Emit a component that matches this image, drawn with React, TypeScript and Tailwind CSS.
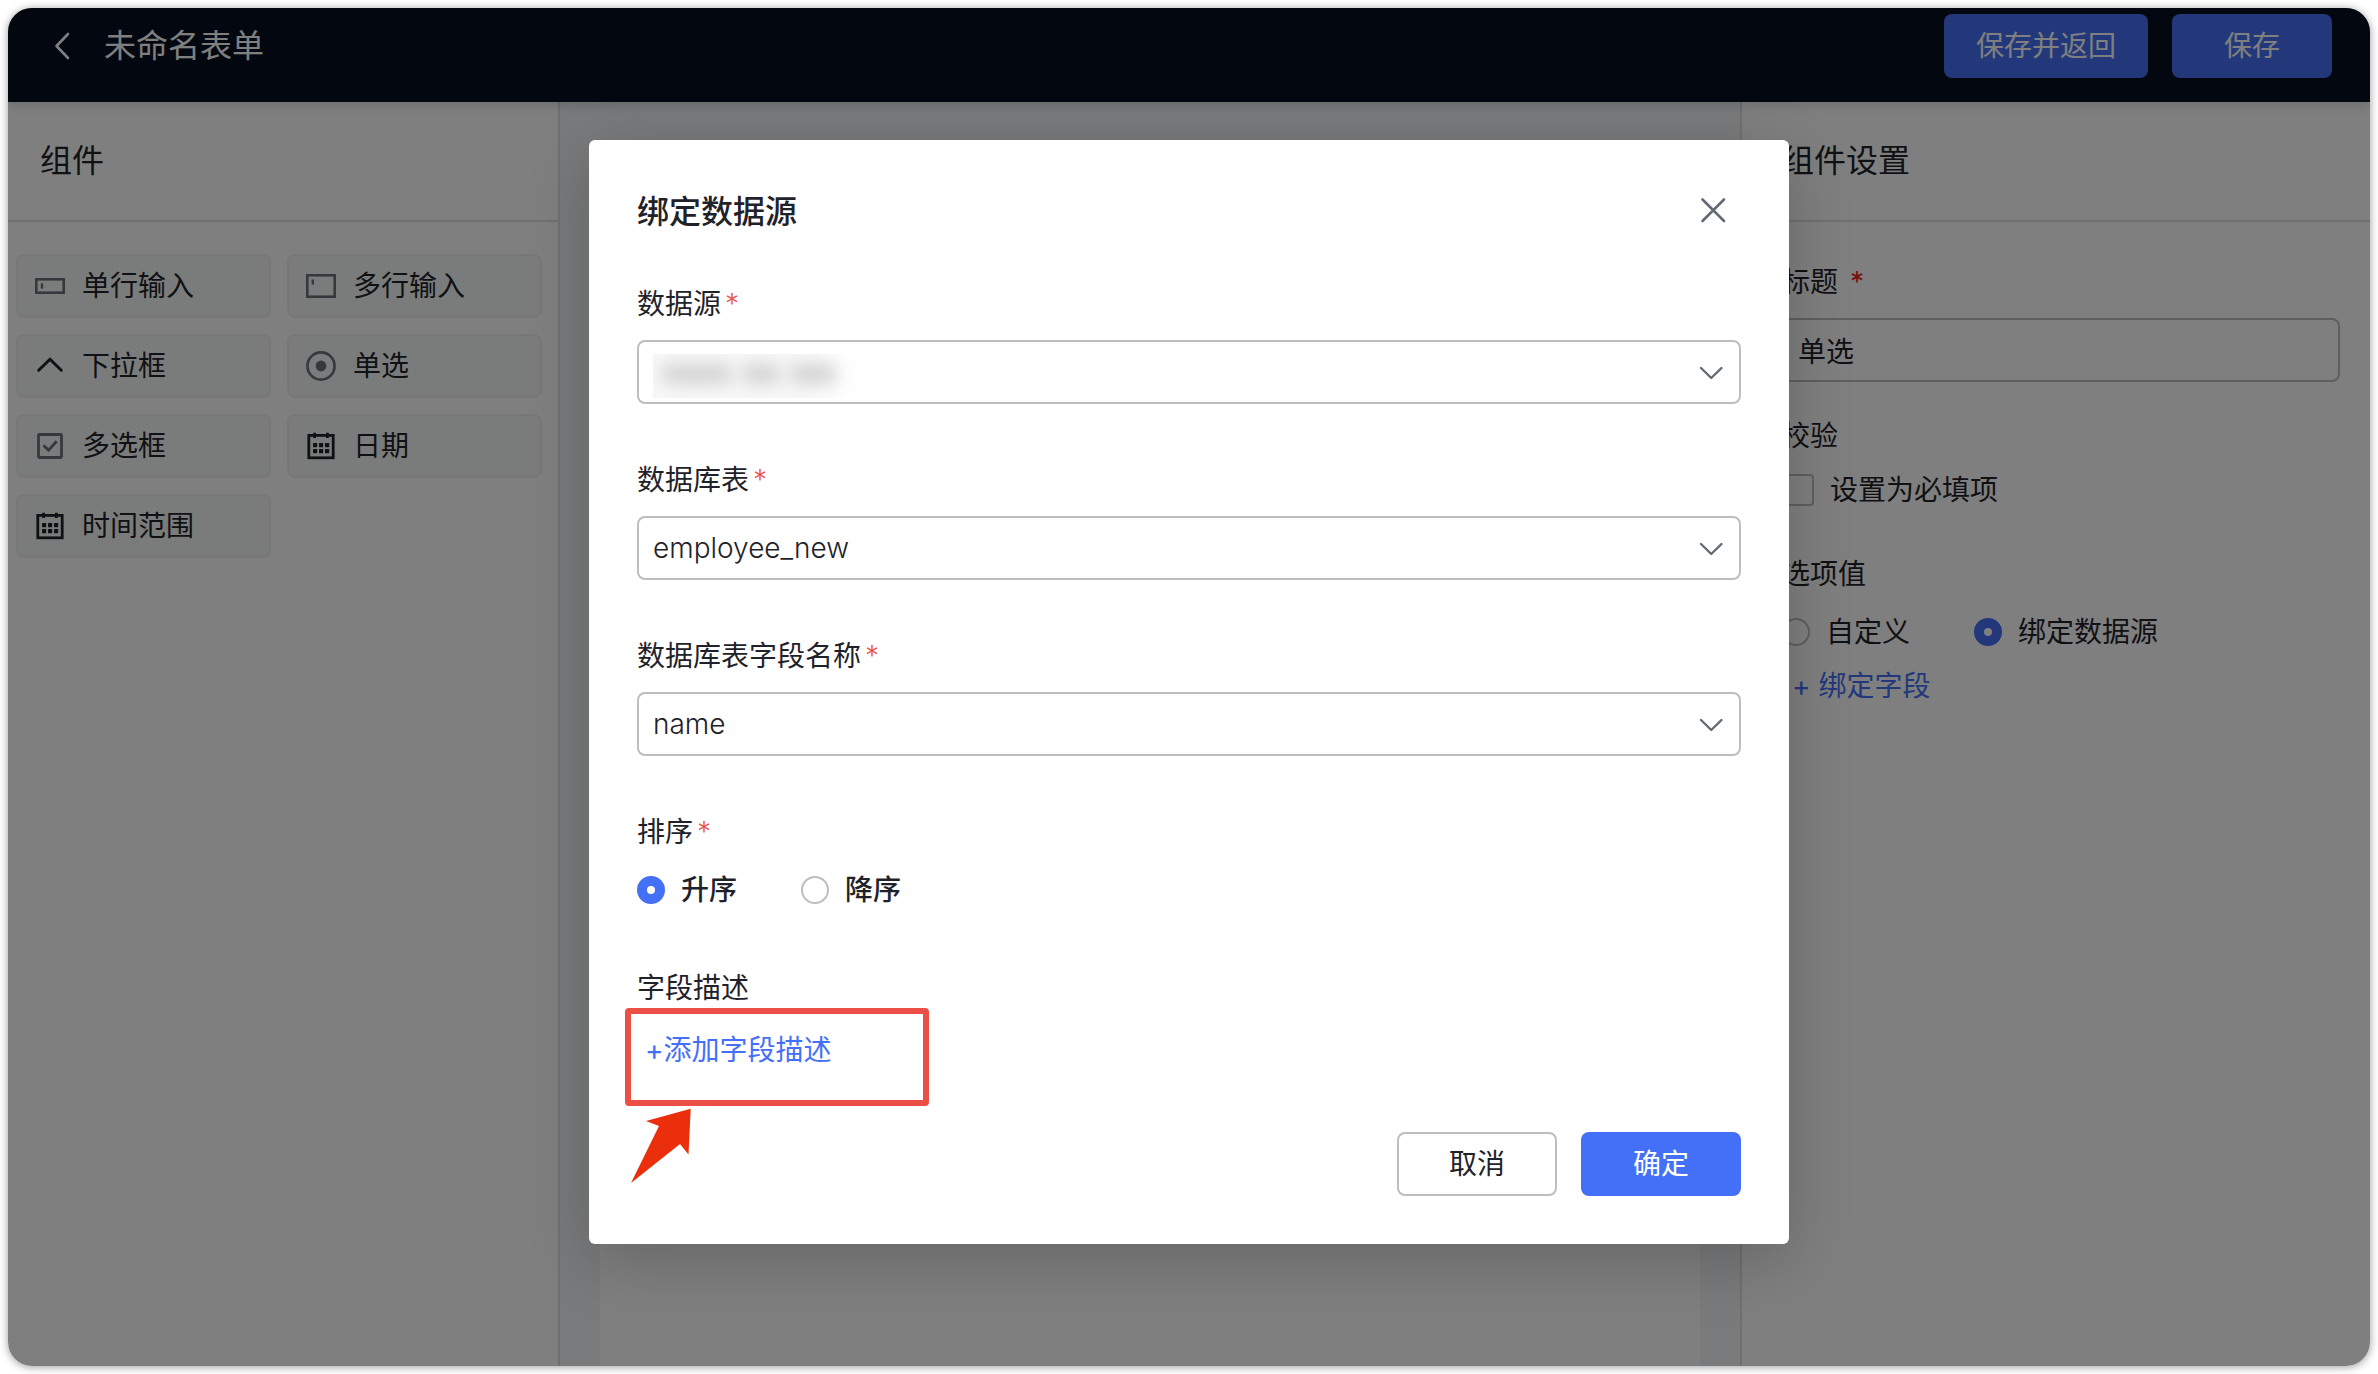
import { useState, type ReactNode } from "react";

const SingleLineIcon = () => (
  <svg className="size-8 text-[#6d717a]" viewBox="0 0 32 32" fill="none" stroke="currentColor" strokeWidth="2.6">
    <rect x="2.3" y="9.3" width="27.4" height="13.4" />
    <path d="M8 13.4v5.2" strokeWidth="2.4" />
  </svg>
);

const MultiLineIcon = () => (
  <svg className="size-8 text-[#6d717a]" viewBox="0 0 32 32" fill="none" stroke="currentColor" strokeWidth="2.6">
    <rect x="2.3" y="5.3" width="27.4" height="21.4" />
    <path d="M7.800 9.400v5.200" strokeWidth="2.400" />
  </svg>
);

const ChevronUpIcon = () => (
  <svg className="size-8" viewBox="0 0 32 32" fill="none" stroke="#1f2329" strokeWidth="3" strokeLinecap="round" strokeLinejoin="round">
    <path d="M4.700 20.300 16 9.200l11.300 11.100" />
  </svg>
);

const RadioIcon = () => (
  <svg className="size-8 text-[#6d717a]" viewBox="0 0 32 32" fill="none">
    <circle cx="16" cy="16" r="13.600" stroke="currentColor" strokeWidth="2.600" />
    <circle cx="16" cy="16" r="5.400" fill="currentColor" />
  </svg>
);

const CheckboxIcon = () => (
  <svg className="size-8 text-[#6d717a]" viewBox="0 0 32 32" fill="none" stroke="currentColor" strokeWidth="2.8">
    <rect x="4.500" y="4.500" width="23" height="23" rx="1" />
    <path d="m9.500 15.200 5 5 8.200-9" />
  </svg>
);

const CalendarIcon = () => (
  <svg className="size-8" viewBox="0 0 32 32" fill="none" stroke="#1f2329" strokeWidth="2.8">
    <rect x="3.800" y="5.400" width="24.400" height="22.400" />
    <path d="M9.600 2.800v5.200M22.400 2.800v5.200" />
    <g fill="#1f2329" stroke="none">
      <rect x="8" y="13" width="4.200" height="4.200" rx=".6" />
      <rect x="14" y="13" width="4.200" height="4.200" rx=".6" />
      <rect x="20" y="13" width="4.200" height="4.200" rx=".6" />
      <rect x="8" y="19" width="4.200" height="4.200" rx=".6" />
      <rect x="14" y="19" width="4.200" height="4.200" rx=".6" />
      <rect x="20" y="19" width="4.200" height="4.200" rx=".6" />
    </g>
  </svg>
);

const ChevronDown = () => (
  <svg
    className="pointer-events-none absolute right-3.5 top-4 size-8"
    viewBox="0 0 32 32"
    fill="none"
    stroke="#646a73"
    strokeWidth="2.4"
    strokeLinecap="round"
    strokeLinejoin="round"
  >
    <path d="m6 12 10.300 10 10.200-10" />
  </svg>
);

const widgets: { label: string; icon: ReactNode }[] = [
  { label: "单行输入", icon: <SingleLineIcon /> },
  { label: "多行输入", icon: <MultiLineIcon /> },
  { label: "下拉框", icon: <ChevronUpIcon /> },
  { label: "单选", icon: <RadioIcon /> },
  { label: "多选框", icon: <CheckboxIcon /> },
  { label: "日期", icon: <CalendarIcon /> },
  { label: "时间范围", icon: <CalendarIcon /> },
];

const radioClass =
  "size-7 shrink-0 appearance-none rounded-full border-2 border-[#bbbfc4] bg-white checked:border-[10px] checked:border-[#4470f7]";

function Radio(props: { name: string; label: string; checked: boolean; onChange: () => void }) {
  return (
    <label className="flex items-center gap-4">
      <input type="radio" name={props.name} checked={props.checked} onChange={props.onChange} className={radioClass} />
      {props.label}
    </label>
  );
}

function SelectField(props: { id: string; label: string; value: string; masked?: boolean }) {
  return (
    <div>
      <label htmlFor={props.id} className="mb-4 flex h-10 items-center gap-1">
        {props.label}
        <span className="font-light text-[#e8584c]">*</span>
      </label>
      <div className="relative">
        <select
          id={props.id}
          defaultValue={props.value}
          className="block h-16 w-full appearance-none rounded-lg border-2 border-[#bbbfc4] bg-white px-3.5 font-light text-[#1f2329]"
        >
          <option value={props.value}>{props.value}</option>
        </select>
        {props.masked && (
          <div className="pointer-events-none absolute left-4 top-3.5 flex h-11 w-61 items-center gap-2 overflow-hidden bg-linear-to-r from-[#f7f7f7] from-60% to-white to-85% pb-1 pl-2">
            <span className="h-5 w-18 rounded-full bg-[#d4d4d4] blur-[8px]" />
            <span className="h-5 w-10 rounded-full bg-[#d4d4d4] blur-[8px]" />
            <span className="h-5 w-12 rounded-full bg-[#d4d4d4] blur-[8px]" />
          </div>
        )}
        <ChevronDown />
      </div>
    </div>
  );
}

function Header() {
  return (
    <header className="relative flex items-start justify-between bg-[#050f21] pr-[38px] pb-6 pl-10 pt-1.5 shadow-[0_4px_10px_rgba(31,35,41,0.16)]">
      <div className="flex h-16 items-center gap-6 text-[32px] text-white">
        <button aria-label="返回" className="block">
          <svg className="size-8" viewBox="0 0 32 32" fill="none" stroke="white" strokeWidth="2.600" strokeLinecap="round" strokeLinejoin="round">
            <path d="M20 4 8.500 16 20 28" />
          </svg>
        </button>
        <h1>未命名表单</h1>
      </div>
      <div className="flex gap-6 text-white">
        <button className="h-16 rounded-lg bg-[#4470f7] px-8">保存并返回</button>
        <button className="h-16 w-40 rounded-lg bg-[#4470f7]">保存</button>
      </div>
    </header>
  );
}

function WidgetPanel() {
  return (
    <aside className="w-[552px] shrink-0 border-r-2 border-[#dee0e3] bg-white">
      <h2 className="flex h-30 items-center border-b-2 border-[#dee0e3] px-8 text-[32px]">组件</h2>
      <div className="grid grid-cols-2 gap-4 pb-8 pl-2 pr-4 pt-8">
        {widgets.map((w) => (
          <button key={w.label} className="flex h-16 items-center gap-4 rounded-lg border-2 border-[#eeefef] bg-[#f5f8f7] px-4">
            {w.icon}
            {w.label}
          </button>
        ))}
      </div>
    </aside>
  );
}

function SettingsPanel() {
  const [source, setSource] = useState("bind");
  return (
    <aside className="w-[630px] shrink-0 border-l-2 border-[#dee0e3] bg-white">
      <h2 className="flex h-30 items-center border-b-2 border-[#dee0e3] px-10 text-[32px]">组件设置</h2>
      <div className="pb-8 pl-10 pr-[30px] pt-10">
        <label htmlFor="title" className="mb-4 flex h-10 items-center gap-3">
          标题
          <span className="text-[#f01d1d]">*</span>
        </label>
        <input id="title" defaultValue="单选" className="block h-16 w-full rounded-lg border-2 border-[#bbbfc4] bg-white px-3.5" />
        <h3 className="mt-8 flex h-11 items-center">校验</h3>
        <label className="mt-2.5 flex h-11 items-center gap-4">
          <input type="checkbox" className="size-8 shrink-0 appearance-none rounded border-2 border-[#bbbfc4] bg-white" />
          设置为必填项
        </label>
        <h3 className="mt-10 flex h-11 items-center">选项值</h3>
        <div className="mt-3.5 flex h-11 items-center gap-16">
          <Radio name="source" label="自定义" checked={source === "custom"} onChange={() => setSource("custom")} />
          <Radio name="source" label="绑定数据源" checked={source === "bind"} onChange={() => setSource("bind")} />
        </div>
        <button className="mt-2.5 flex h-11 items-center gap-2 pl-2.5 text-[#4470f7]">
          <span>+</span>
          <span>绑定字段</span>
        </button>
      </div>
    </aside>
  );
}

function BindDialog() {
  const [order, setOrder] = useState("asc");
  return (
    <section
      role="dialog"
      aria-labelledby="dialog-title"
      className="w-[1200px] rounded-md bg-white p-12 shadow-[0_16px_64px_rgba(0,0,0,0.2)]"
    >
      <div className="mb-12 flex h-12 items-start justify-between">
        <h2 id="dialog-title" className="text-[32px] leading-12 font-medium">
          绑定数据源
        </h2>
        <button aria-label="关闭" className="mr-3 mt-1.5">
          <svg className="size-8" viewBox="0 0 32 32" fill="none" stroke="#646a73" strokeWidth="2.600" strokeLinecap="round">
            <path d="m5.500 5.500 21.500 21.500M27 5.500 5.500 27" />
          </svg>
        </button>
      </div>
      <div className="flex flex-col gap-14">
        <SelectField id="datasource" label="数据源" value="" masked />
        <SelectField id="table" label="数据库表" value="employee_new" />
        <SelectField id="column" label="数据库表字段名称" value="name" />
        <fieldset>
          <legend className="mb-4 flex h-10 items-center gap-1">
            排序
            <span className="font-light text-[#e8584c]">*</span>
          </legend>
          <div className="flex h-11 items-center gap-16 font-medium">
            <Radio name="order" label="升序" checked={order === "asc"} onChange={() => setOrder("asc")} />
            <Radio name="order" label="降序" checked={order === "desc"} onChange={() => setOrder("desc")} />
          </div>
        </fieldset>
        <div>
          <h3 className="flex h-10 items-center">字段描述</h3>
          <div className="relative pt-5">
            <button className="ml-2 flex h-11 items-center text-[#4470f7]">+添加字段描述</button>
            <div className="pointer-events-none absolute -left-3 top-0 h-[98px] w-76 rounded border-[6px] border-[#ec4f45]" />
            <svg className="pointer-events-none absolute -left-2 top-25 h-20 w-16" viewBox="0 0 64 80" fill="#eb2f0c">
              <path d="M61.700 .7 17 13l13 5L2 75l49-39 8.500 10.500z" />
            </svg>
          </div>
        </div>
      </div>
      <div className="mt-15 flex justify-end gap-6">
        <button className="h-16 w-40 rounded-lg border-2 border-[#bbbfc4] bg-white">取消</button>
        <button className="h-16 w-40 rounded-lg bg-[#4470f7] text-white">确定</button>
      </div>
    </section>
  );
}

export default function App() {
  return (
    <div className="flex min-h-screen bg-white p-2 font-['Inter','Noto_Sans_CJK_SC',sans-serif] text-[28px] leading-10 text-[#1f2329]">
      <div className="relative flex grow flex-col overflow-hidden rounded-3xl bg-white shadow-[0_1px_8px_rgba(0,0,0,0.4)]">
        <Header />
        <div className="flex grow">
          <WidgetPanel />
          <main className="flex grow bg-[#f3f5f9] px-10 pt-10">
            <div className="grow bg-white" />
          </main>
          <SettingsPanel />
        </div>
        <div className="absolute inset-0 flex items-start justify-center bg-black/50 pt-33">
          <BindDialog />
        </div>
      </div>
    </div>
  );
}
